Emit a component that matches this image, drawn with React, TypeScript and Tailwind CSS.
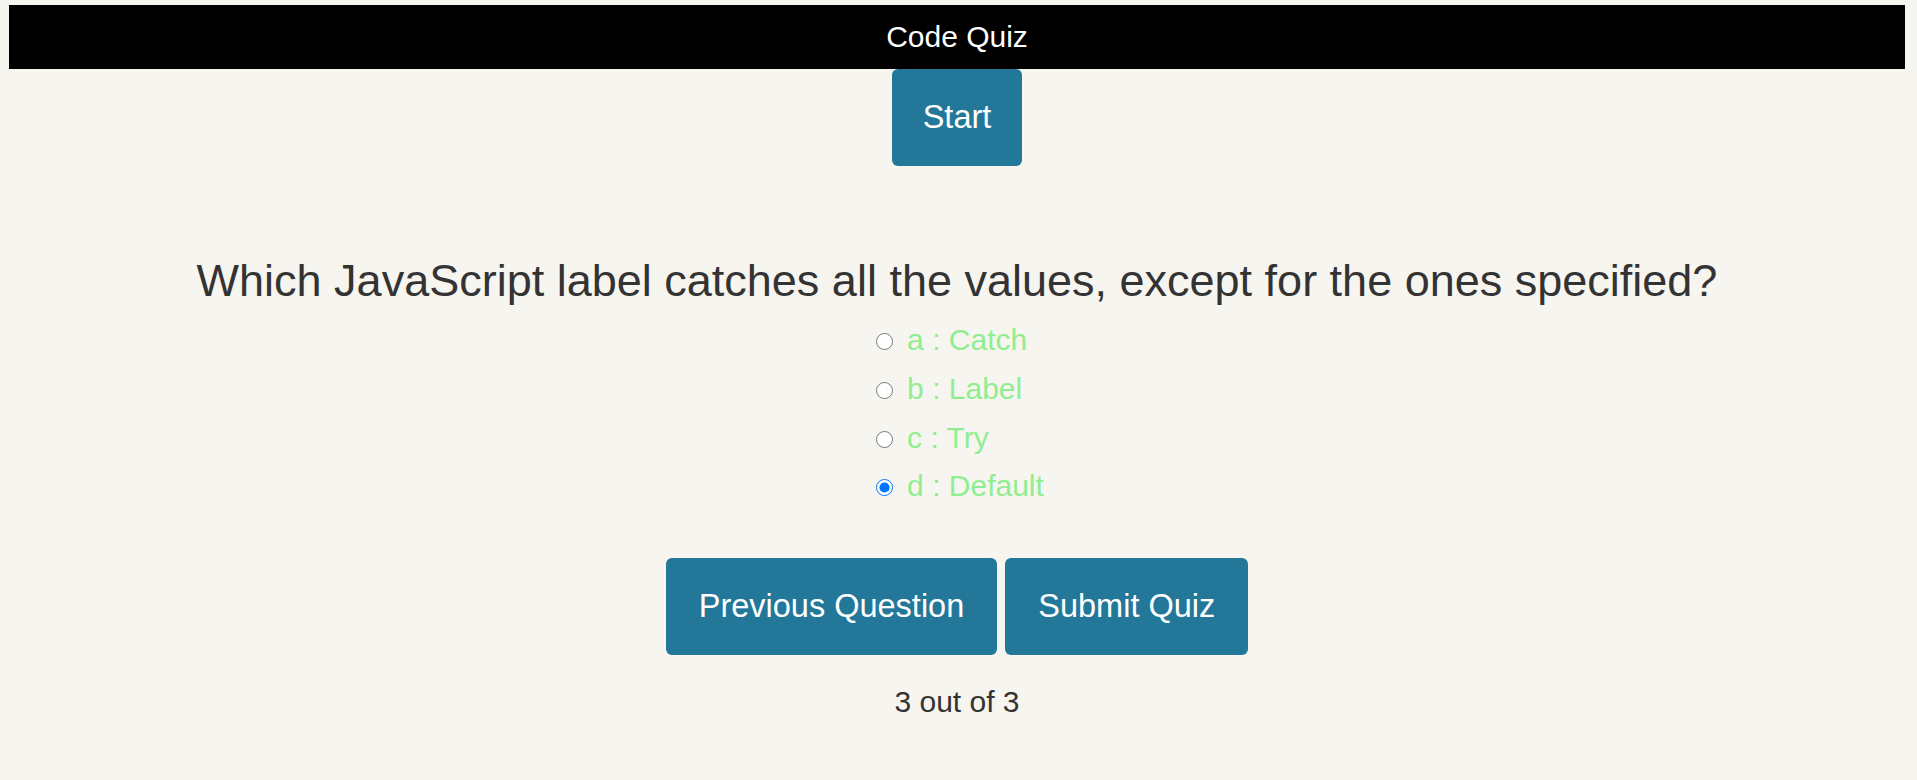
import { useState } from "react";

const options = [
    { key: "a", label: "Catch" },
    { key: "b", label: "Label" },
    { key: "c", label: "Try" },
    { key: "d", label: "Default" },
];

const btn =
    "bg-[#237799] text-white rounded-[6px] px-[33px] py-[30px] text-[32.5px] leading-[normal]";

export default function App() {
    const [answer, setAnswer] = useState("d");

    return (
        <div
            className="min-h-screen bg-[#f7f5f0] pt-[5px] text-[#333]"
            style={{ fontFamily: '"Liberation Sans", Arial, sans-serif' }}
        >
            <div className="ml-[9px] mr-[12px] flex flex-col items-center">
                <header className="w-full h-[64px] bg-black text-white text-[30px] leading-[normal] flex items-center justify-center">
                    Code Quiz
                </header>

                <button className="bg-[#237799] text-white rounded-[6px] px-[31px] py-[30px] text-[32.5px] leading-[normal]">
                    Start
                </button>

                <h2 className="mt-[89px] text-[45px] leading-[normal]">
                    Which JavaScript label catches all the values, except for
                    the ones specified?
                </h2>

                <div className="mt-[16px] flex flex-col items-start gap-[14.8px] ml-[6px]">
                    {options.map((o) => (
                        <label
                            key={o.key}
                            className="flex items-center gap-[14px] text-[30px] leading-[normal] text-[#90ee90] cursor-pointer"
                        >
                            <input
                                type="radio"
                                name="answer"
                                checked={answer === o.key}
                                onChange={() => setAnswer(o.key)}
                                className="w-[17px] h-[17px] m-0 mt-[3px]"
                            />
                            {o.key} : {o.label}
                        </label>
                    ))}
                </div>

                <div className="mt-[55px] flex gap-[8px]">
                    <button className={btn}>Previous Question</button>
                    <button className={btn}>Submit Quiz</button>
                </div>

                <p className="mt-[30px] text-[30px] leading-[normal]">3 out of 3</p>
            </div>
        </div>
    );
}
